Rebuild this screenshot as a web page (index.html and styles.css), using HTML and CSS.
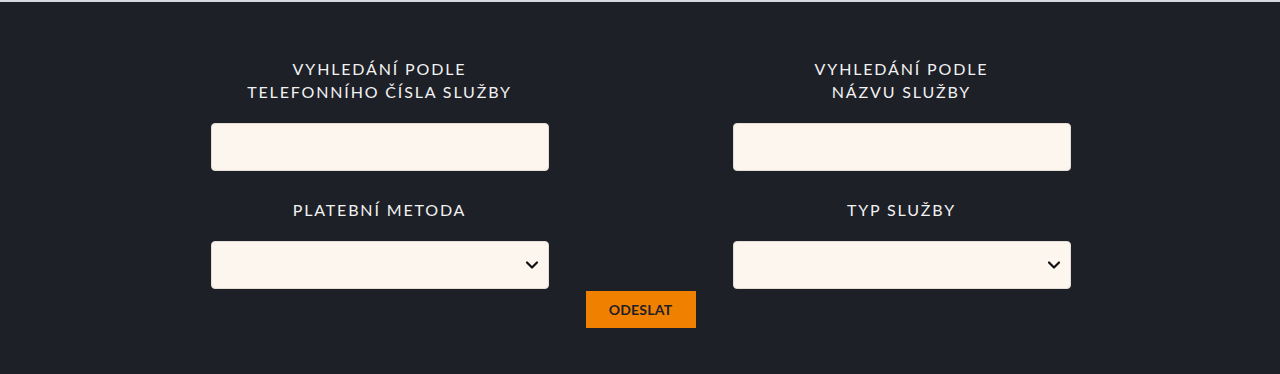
FILE: index.html
```html
<!DOCTYPE html>
<html lang="cs">
<head>
<meta charset="utf-8">
<link rel="stylesheet" href="styles.css">
</head>
<body>
<div class="topbar"></div>
<section class="search">
  <form class="form">
    <div class="grid">
      <div class="field">
        <label class="label">VYHLEDÁNÍ PODLE<br>TELEFONNÍHO ČÍSLA SLUŽBY</label>
        <input class="input" type="text">
      </div>
      <div class="field">
        <label class="label">VYHLEDÁNÍ PODLE<br>NÁZVU SLUŽBY</label>
        <input class="input" type="text">
      </div>
      <div class="field">
        <label class="label">PLATEBNÍ METODA</label>
        <div class="select">
          <svg class="chev" width="14" height="10" viewBox="0 0 14 10"><path d="M2 2.5 L7 7.5 L12 2.5" fill="none" stroke="#111" stroke-width="2.2" stroke-linecap="round" stroke-linejoin="round"/></svg>
        </div>
      </div>
      <div class="field">
        <label class="label">TYP SLUŽBY</label>
        <div class="select">
          <svg class="chev" width="14" height="10" viewBox="0 0 14 10"><path d="M2 2.5 L7 7.5 L12 2.5" fill="none" stroke="#111" stroke-width="2.2" stroke-linecap="round" stroke-linejoin="round"/></svg>
        </div>
      </div>
    </div>
    <div class="actions">
      <button class="btn" type="button">ODESLAT</button>
    </div>
  </form>
</section>
</body>
</html>
```

FILE: styles.css
```css
html, body {
  margin: 0;
  padding: 0;
  background: #1e2027;
}
body {
  font-family: Lato, "Open Sans", sans-serif;
  height: 374px;
  overflow: hidden;
}
.topbar {
  height: 2px;
  background: #d6dade;
}
.search {
  padding-top: 55px;
}
.form {
  width: 860px;
  margin: 0 auto;
  padding-left: 1px;
}
.grid {
  display: grid;
  grid-template-columns: 338px 338px;
  column-gap: 184px;
  row-gap: 27px;
}
.field {
  display: flex;
  flex-direction: column;
  align-items: stretch;
}
.label {
  display: block;
  color: #f2f2f2;
  font-size: 16px;
  line-height: 23px;
  letter-spacing: 1.85px;
  text-align: center;
  margin-bottom: 20px;
}
.input, .select {
  box-sizing: border-box;
  height: 48px;
  width: 338px;
  background: #fdf6ee;
  border: 1px solid #e4ddd5;
  border-radius: 4px;
  margin: 0;
}
.select {
  display: flex;
  align-items: center;
  justify-content: flex-end;
  padding-right: 9px;
}
.chev {
  display: block;
}
.actions {
  display: flex;
  justify-content: center;
  padding-top: 2px;
}
.btn {
  width: 110px;
  height: 37px;
  background: #f08000;
  border: none;
  border-radius: 0;
  color: #1e2027;
  font-family: Lato, sans-serif;
  font-weight: 700;
  font-size: 14px;
  letter-spacing: 0.2px;
  cursor: pointer;
  padding: 0;
}
```
